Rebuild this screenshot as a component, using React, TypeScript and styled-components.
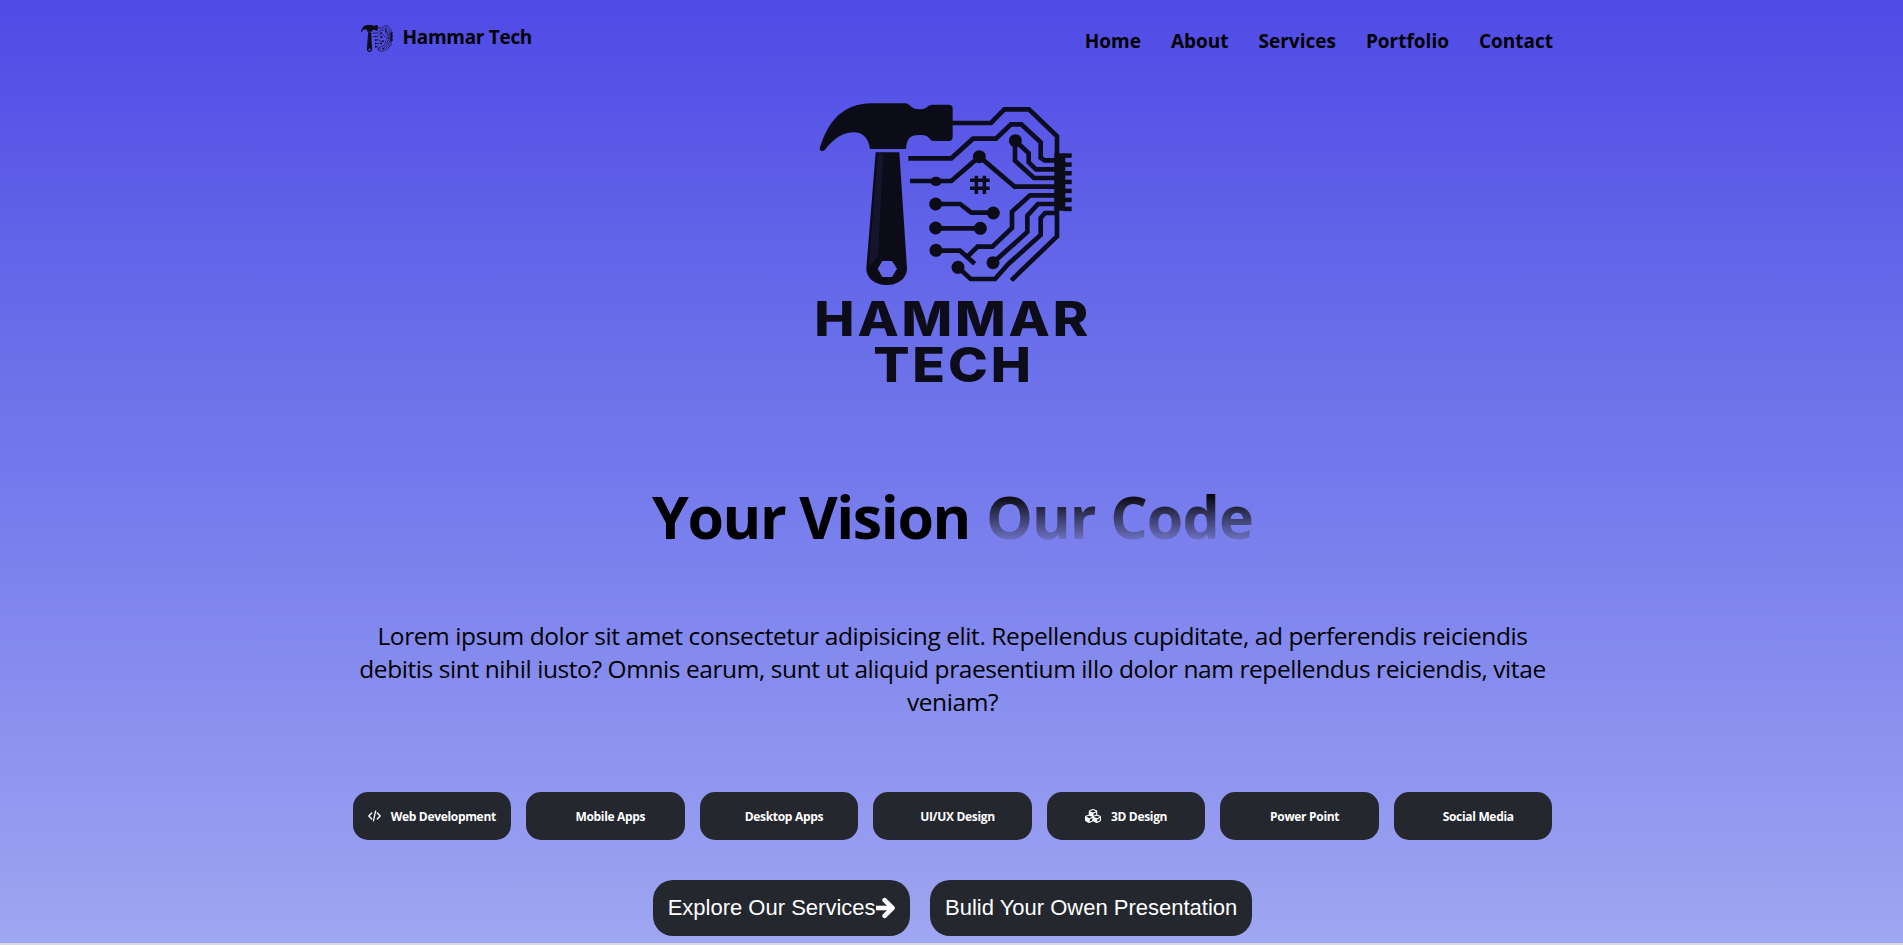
import React from 'react';
import styled, { createGlobalStyle } from 'styled-components';
import { FaCubes } from 'react-icons/fa';

const GlobalStyle = createGlobalStyle`
  * { box-sizing: border-box; }
  html { background: #d9d9e6; }
  body { margin: 0; overflow: hidden; font-family: 'Open Sans', 'Noto Sans', sans-serif; color: #000; }
  h1, p { margin: 0; }
`;

const Page = styled.div`
  height: 943px;
  padding-left: 2px;
  background: linear-gradient(180deg, #4f4ae6 0%, #6d74ea 42%, #7379ec 50%, #9fa6f1 100%);
  box-shadow: 0 1px 0 #b4b4c4;
`;

const Container = styled.div`
  width: 1200px;
  margin: 0 auto;
  display: flex;
  flex-direction: column;
  align-items: center;
`;

const Header = styled.header`
  width: 100%;
  height: 76px;
  display: flex;
  justify-content: space-between;
  align-items: center;
`;

const Brand = styled.a`
  display: flex;
  align-items: center;
  padding-left: 8.5px;
  gap: 9.5px;
`;

const BrandName = styled.span`
  font-size: 19px;
  font-weight: 700;
  line-height: 26px;
  letter-spacing: -0.3px;
  padding-bottom: 2px;
`;

const Nav = styled.nav`
  display: flex;
  gap: 30px;
  padding-top: 5px;
  margin-right: -0.6px;
`;

const NavLink = styled.a`
  font-size: 19px;
  font-weight: 700;
  line-height: 26px;
`;

const BrandMark = styled.svg`
  display: block;
  width: 32px;
  height: 27px;
`;

const HeroLogo = styled.svg`
  display: block;
  width: 305px;
  height: 310px;
  margin-top: 14px;
`;

const LogoText = styled.text`
  font-family: Inter, 'Liberation Sans', sans-serif;
  font-weight: 800;
  font-size: 144px;
  letter-spacing: 7.5px;
  fill: #0c0d18;
`;

const Title = styled.h1`
  margin-top: 76px;
  font-size: 59px;
  line-height: 80px;
  letter-spacing: -1.4px;
  display: flex;
  gap: 16px;
`;

const Faded = styled.span`
  letter-spacing: -0.9px;
  background: linear-gradient(180deg, #000 20%, #7075c8 82%);
  background-clip: text;
  -webkit-background-clip: text;
  color: transparent;
`;

const Intro = styled.p`
  margin-top: 63px;
  font-size: 24.5px;
  line-height: 33px;
  letter-spacing: -0.42px;
  text-align: center;
`;

const Line = styled.span`
  display: block;
  white-space: nowrap;
`;

const Tags = styled.div`
  width: 100%;
  margin-top: 74px;
  display: grid;
  grid-template-columns: repeat(7, minmax(0, 1fr));
  gap: 15px;
`;

const Tag = styled.div`
  height: 48px;
  border-radius: 15px;
  background: #25272f;
  color: #fff;
  display: flex;
  align-items: center;
  justify-content: center;
  gap: 10px;
  font-size: 12px;
  font-weight: 700;
  letter-spacing: -0.32px;
  white-space: nowrap;
`;

const TagIcon = styled.span`
  display: flex;
`;

const Actions = styled.div`
  display: flex;
  gap: 20px;
  margin-top: 40px;
`;

const Action = styled.button`
  height: 56px;
  border: 0;
  border-radius: 20px;
  padding: 0 15px;
  background: #25272f;
  color: #fff;
  font: 22px 'Liberation Sans', Arial, sans-serif;
  display: flex;
  align-items: center;
`;

const pins = [190, 217, 243, 269, 296, 323, 350];

const nodes = [
  [646, 152], [538, 200], [407, 342], [580, 369], [407, 414],
  [541, 415], [408, 481], [579, 518], [474, 532],
];

const traces = [
  'M455 99H573L613 58H687L771 139V439L634 571',
  'M325 205H454L519 146H588L633 103H664L722 157V203L734 211H765',
  'M646 152L686 190V217L708 238H765',
  'M645 152V212L702 264H765',
  'M330 273H454L538 200L644 290H765',
  'M407 342H480L514 368H580',
  'M407 415H541',
  'M408 482H480L524 521',
  'M502 500L533 470H577L636 414V365L690 316H765',
  'M579 518L682 426V377L714 342H765',
  'M474 532L512 567H585L625 522L722 435V384L735 369H765',
];

function Mark() {
  return (
    <g fill="#0b0c18">
      <path d="M60 172C85 95 125 42 215 40H318C335 46 333 57 357 58C385 58 377 45 400 44H446Q458 44 458 56V141Q458 153 446 153H400C386 150 388 138 372 136C338 133 321 137 318 177H210C205 140 185 127 160 127C120 128 95 155 75 179Q69 185 62 182Q57 180 60 172Z" />
      <path fillRule="evenodd" d="M227 187H298L321 535C321 602 199 602 199 535ZM233 536L247 561H276L291 536L276 513H247Z" />
      <path fill="#15152d" d="M234 190H250L234 498L206 530Z" />
      <g fill="none" stroke="#0b0c1e" strokeWidth="14">
        {traces.map(d => <path key={d} d={d} />)}
        <path strokeWidth="10.500" d="M529 257V312M553 257V312M510 271H569M510 295H569" />
      </g>
      {nodes.map(([cx, cy]) => <circle key={`${cx}-${cy}`} cx={cx} cy={cy} r="19.500" />)}
      <ellipse cx="408" cy="274" rx="17" ry="14" />
      <rect x="763" y="190" width="33" height="172" />
      {pins.map(y => <rect key={y} x="790" y={y} width="25" height="13.500" />)}
    </g>
  );
}

function CodeIcon() {
  return (
    <svg width="13" height="12" viewBox="0 0 13 12" fill="none" stroke="#fff" strokeWidth="1.300" strokeLinecap="round" strokeLinejoin="round">
      <path d="M3.700 3L.8 6L3.700 9M9.300 3L12.200 6L9.300 9M7.600 1.200L5.400 10.800" />
    </svg>
  );
}

function ArrowIcon() {
  return (
    <svg width="19.500" height="22" viewBox="0 0 19.500 22" fill="none" stroke="#fff" strokeWidth="4.600" strokeLinecap="round" strokeLinejoin="round">
      <path strokeLinecap="butt" d="M0 11H15" />
      <path d="M8.600 3.200L16.500 11L8.600 18.800" />
    </svg>
  );
}

const links = ['Home', 'About', 'Services', 'Portfolio', 'Contact'];

const tags: { label: string; icon?: React.ReactNode }[] = [
  { label: 'Web Development', icon: <CodeIcon /> },
  { label: 'Mobile Apps' },
  { label: 'Desktop Apps' },
  { label: 'UI/UX Design' },
  { label: '3D Design', icon: <FaCubes size={16} /> },
  { label: 'Power Point' },
  { label: 'Social Media' },
];

export default function App() {
  return (
    <>
      <GlobalStyle />
      <Page>
        <Container>
          <Header>
            <Brand>
              <BrandMark viewBox="58 40 758 546" preserveAspectRatio="none"><Mark /></BrandMark>
              <BrandName>Hammar Tech</BrandName>
            </Brand>
            <Nav>{links.map(t => <NavLink key={t}>{t}</NavLink>)}</Nav>
          </Header>
          <HeroLogo viewBox="0 0 915 930">
            <Mark />
            <LogoText transform="scale(1.12 1)">
              <tspan x="38.500" y="739">HAMMAR</tspan>
              <tspan x="196" y="876">TECH</tspan>
            </LogoText>
          </HeroLogo>
          <Title><span>Your Vision</span><Faded>Our Code</Faded></Title>
          <Intro>
            <Line>Lorem ipsum dolor sit amet consectetur adipisicing elit. Repellendus cupiditate, ad perferendis reiciendis</Line>
            <Line>debitis sint nihil iusto? Omnis earum, sunt ut aliquid praesentium illo dolor nam repellendus reiciendis, vitae</Line>
            <Line>veniam?</Line>
          </Intro>
          <Tags>
            {tags.map(({ label, icon }) => (
              <Tag key={label}><TagIcon>{icon}</TagIcon>{label}</Tag>
            ))}
          </Tags>
          <Actions>
            <Action>Explore Our Services<ArrowIcon /></Action>
            <Action>Bulid Your Owen Presentation</Action>
          </Actions>
        </Container>
      </Page>
    </>
  );
}
